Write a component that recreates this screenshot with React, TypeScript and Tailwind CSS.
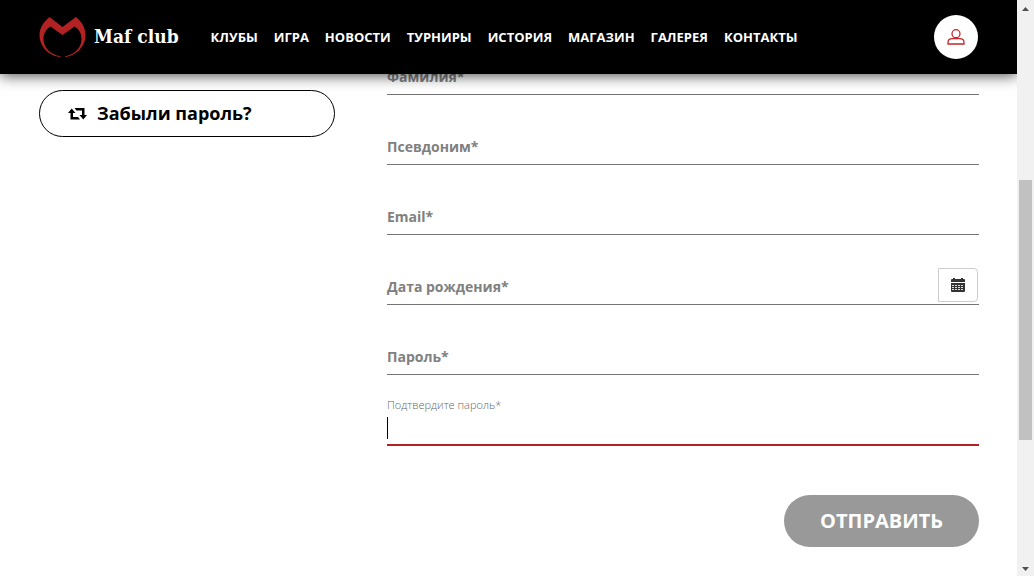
import type { ReactNode } from "react";

const links = ["Клубы", "Игра", "Новости", "Турниры", "История", "Магазин", "Галерея", "Контакты"];

function Logo() {
  return (
    <svg width="48" height="42" viewBox="0 0 48 42" fill="#b22222" aria-hidden="true">
      <path d="M11.500 1 L24.500 11 L38 1 C44 6 47.500 12 47.500 19 C47.500 31 37.500 40 27 41 L27 40.300 C36.500 38.500 43.500 32 43.500 23 C43.500 17.500 41 13 36.500 10.500 L24.500 19 L12.500 10.500 C8 13 5.500 17.500 5.500 23 C5.500 32 12.500 38.500 22.500 40.300 L22.500 41 C11 40 1.500 31 1.500 19 C1.500 12 5.500 6 11.500 1 Z" />
    </svg>
  );
}

function UserIcon() {
  return (
    <svg width="18" height="16" viewBox="0 0 18 16" fill="none" stroke="#c4262b" strokeWidth="1.3" aria-hidden="true">
      <circle cx="9" cy="4.700" r="4" />
      <path d="M1 15 V13.500 C1 11 3 9.700 5.500 9.700 H12.500 C15 9.700 17 11 17 13.500 V15 Z" />
    </svg>
  );
}

function RetweetIcon() {
  return (
    <svg width="19" height="14" viewBox="0 0 19 14" aria-hidden="true">
      <path d="M3.700 2.500 L7.500 7 H5 V11 H10 L12 13.500 H2.500 V7 H0 Z M15.300 13.500 L11.500 9 H14 V4.500 H8.500 L6.500 2 H16.500 V9 H19 Z" />
    </svg>
  );
}

function CalendarIcon() {
  return (
    <svg width="14" height="14" viewBox="0 0 14 14" aria-hidden="true">
      <path fill="#333" d="M0 4 V2 Q0 1 1 1 H2 V0 H4 V1 H10 V0 H12 V1 H13 Q14 1 14 2 V4 Z M0 5 H14 V13 Q14 14 13 14 H1 Q0 14 0 13 Z" />
      <path stroke="#ddd" strokeWidth="1" strokeDasharray="2 1" d="M1 7.500 H13 M1 9.500 H13 M1 11.500 H13" />
    </svg>
  );
}

function Field({ id, label, type = "text", children }: { id: string; label: string; type?: string; children?: ReactNode }) {
  return (
    <div className="flex h-[70px] items-end border-b border-[#757575]">
      <div className="grid h-9 min-w-0 flex-1">
        <label htmlFor={id} className="pointer-events-none z-[1] col-start-1 row-start-1 pt-[7px] text-sm leading-6 font-bold text-[#808080]">
          {label}
        </label>
        <input id={id} type={type} className="col-start-1 row-start-1 w-full bg-transparent outline-none" />
      </div>
      {children}
    </div>
  );
}

export default function App() {
  return (
    <div className="flex h-screen overflow-hidden bg-white font-['Open_Sans','Noto_Sans',sans-serif] text-black">
      <div className="min-w-0 flex-1 overflow-hidden">
        <header className="relative z-10 flex h-[74px] items-center bg-black pr-[39px] pl-[38px] text-white shadow-[0_1px_14px_rgba(0,0,0,0.75)]">
          <a href="#home" className="flex items-center gap-2">
            <Logo />
            <span className="pb-0.5 font-['DejaVu_Serif_Condensed','DejaVu_Serif',serif] text-[19px] font-bold">Maf club</span>
          </a>
          <nav className="ml-8 flex flex-1 gap-4 pt-0.5 text-[13px] font-bold uppercase">
            {links.map((link) => (
              <a key={link} href="#section">{link}</a>
            ))}
          </nav>
          <button type="button" aria-label="Профиль" className="flex size-11 items-center justify-center rounded-full bg-white">
            <UserIcon />
          </button>
        </header>
        <main className="-mt-[49px] flex gap-[52px] pr-[38px] pl-[39px]">
          <aside className="w-[296px] shrink-0 pt-[65px]">
            <a href="#reset" className="flex h-[47px] items-center gap-2.5 rounded-full border border-black pb-0.5 pl-7 text-lg font-bold">
              <RetweetIcon />
              Забыли пароль?
            </a>
          </aside>
          <form className="min-w-0 flex-1">
            <Field id="surname" label="Фамилия*" />
            <Field id="nickname" label="Псевдоним*" />
            <Field id="email" label="Email*" type="email" />
            <Field id="birthday" label="Дата рождения*">
              <button type="button" aria-label="Выбрать дату" className="mr-px mb-0.5 flex h-[34px] w-10 items-center justify-center rounded-r border border-[#ccc] bg-white">
                <CalendarIcon />
              </button>
            </Field>
            <Field id="password" label="Пароль*" type="password" />
            <div className="flex h-[71px] flex-col justify-end border-b-2 border-[#b22222]">
              <label htmlFor="confirm" className="text-[11px] leading-4 font-light text-[#666]">Подтвердите пароль*</label>
              <div className="mt-1 mb-[5px] flex h-[22px]">
                <span className="w-px bg-black" />
                <input id="confirm" type="password" className="min-w-0 flex-1 bg-transparent outline-none" />
              </div>
            </div>
            <div className="mt-[49px] flex justify-end">
              <button type="submit" className="h-[52px] rounded-full bg-[#999] px-9 text-xl font-bold text-white uppercase">
                Отправить
              </button>
            </div>
          </form>
        </main>
      </div>
      <div aria-hidden="true" className="flex w-[17px] shrink-0 flex-col items-center bg-[#f1f1f1]">
        <svg width="17" height="17" viewBox="0 0 17 17" fill="#505050"><path d="M5 11 L8.500 7 L12 11 Z" /></svg>
        <div className="flex w-[13px] flex-1 flex-col">
          <div className="flex-[163]" />
          <div className="flex-[260] bg-[#c1c1c1]" />
          <div className="flex-[119]" />
        </div>
        <svg width="17" height="17" viewBox="0 0 17 17" fill="#505050"><path d="M5 8 L8.500 12 L12 8 Z" /></svg>
      </div>
    </div>
  );
}
